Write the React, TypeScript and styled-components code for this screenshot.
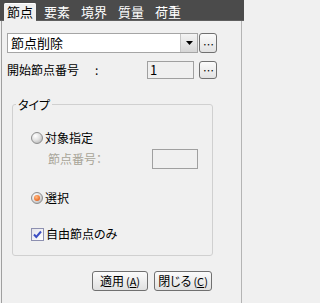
import React from "react";
import styled, { createGlobalStyle } from "styled-components";

const Global = createGlobalStyle`
  html, body { margin: 0; padding: 0; background: #f0f0f0; }
  body { font-family: "Noto Sans CJK JP", "Noto Sans", sans-serif; }
  * { box-sizing: border-box; }
`;

const Window = styled.div`
  width: 244px;
  height: 303px;
  display: flex;
  flex-direction: column;
  overflow: hidden;
  background: #f0f0f0;
  font-size: 12px;
  color: #000;
  font-feature-settings: "palt";
`;

const TabBar = styled.div`
  height: 21px;
  flex: none;
  background: #4b4b4b;
  border-bottom: 1px solid #5f5f5f;
  display: flex;
  align-items: flex-end;
  gap: 5px;
  padding-left: 4px;
`;

const Tab = styled.div<{ $active?: boolean }>`
  width: 32px;
  height: 18px;
  margin-bottom: -1px;
  display: flex;
  align-items: center;
  justify-content: center;
  font-size: 13px;
  line-height: 18px;
  color: ${(p) => (p.$active ? "#000" : "#fff")};
  background: ${(p) => (p.$active ? "#f0f0f0" : "transparent")};
  border-radius: 2px 2px 0 0;
  box-shadow: ${(p) => (p.$active ? "inset 0 1px 0 #ffffff" : "none")};
`;

const Panel = styled.div`
  flex: 1;
  width: 241px;
  margin-left: 1px;
  border-left: 1px solid #a0a0a0;
  border-right: 1px solid #b4b4b4;
  padding: 12px 0 0 5px;
  display: flex;
  flex-direction: column;
`;

const Row = styled.div<{ $top?: number; $h: number }>`
  display: flex;
  align-items: center;
  height: ${(p) => p.$h}px;
  margin-top: ${(p) => p.$top ?? 0}px;
`;

const Combo = styled.div`
  width: 191px;
  height: 20px;
  border: 1px solid #a5a5a5;
  background: #fff;
  display: flex;
`;

const ComboText = styled.div`
  flex: 1;
  padding-left: 3px;
  font-size: 13px;
  line-height: 18px;
`;

const ComboArrow = styled.div`
  width: 17px;
  height: 100%;
  border-left: 1px solid #c6c6c6;
  background: linear-gradient(#f4f4f4, #d6d6d6);
  display: flex;
  align-items: center;
  justify-content: center;
`;

const DotButton = styled.div<{ $h: number }>`
  width: 18px;
  height: ${(p) => p.$h}px;
  margin-left: 5px;
  border: 1px solid #707070;
  border-radius: 3px;
  background: linear-gradient(#fbfbfb, #e2e2e2);
  display: flex;
  align-items: flex-end;
  justify-content: center;
  font-size: 11px;
  line-height: 12px;
  padding-bottom: 2px;
  letter-spacing: -1px;
`;

const Label = styled.span<{ $w?: number; $muted?: boolean }>`
  width: ${(p) => (p.$w ? `${p.$w}px` : "auto")};
  flex: none;
  line-height: 14px;
  white-space: nowrap;
  color: ${(p) => (p.$muted ? "#a8a598" : "#000")};
`;

const TextBox = styled.div<{ $w: number; $h: number }>`
  width: ${(p) => p.$w}px;
  height: ${(p) => p.$h}px;
  border: 1px solid #a0a0a0;
  background: #f0f0f0;
  padding-left: 2px;
  font-size: 13px;
  line-height: ${(p) => p.$h - 2}px;
  flex: none;
`;

const Group = styled.fieldset`
  margin: 19px 0 0 5px;
  width: 201px;
  padding: 0;
  border: 1px solid #d0d0d0;
  border-radius: 3px;
  min-width: 0;
`;

const Legend = styled.legend`
  margin-left: 3px;
  padding: 0 2px;
  font-size: 12px;
  line-height: 13px;
`;

const GroupBody = styled.div`
  display: flex;
  flex-direction: column;
  padding: 20px 14px 14px 18px;
`;

const OptionRow = styled.div<{ $top?: number }>`
  display: flex;
  align-items: center;
  gap: 2px;
  height: 14px;
  margin-top: ${(p) => p.$top ?? 0}px;
`;

const SubRow = styled.div`
  display: flex;
  align-items: center;
  height: 20px;
  margin-top: 4px;
  padding-left: 17px;
  justify-content: space-between;
`;

const Radio = styled.span<{ $checked?: boolean }>`
  position: relative;
  flex: none;
  width: 12px;
  height: 12px;
  border-radius: 50%;
  border: 1px solid #8e8e8e;
  background: radial-gradient(circle at 35% 30%, #ffffff 0%, #e2e2e2 45%, #a9a9a9 100%);
  &::after {
    content: "";
    display: ${(p) => (p.$checked ? "block" : "none")};
    position: absolute;
    inset: 2px;
    border-radius: 50%;
    background: radial-gradient(circle at 40% 35%, #ffc08a 0%, #f07a36 55%, #d2501a 100%);
  }
`;

const CheckBox = styled.span`
  flex: none;
  width: 13px;
  height: 13px;
  border: 1px solid #8d90b0;
  background: linear-gradient(135deg, #e4e4ea, #ffffff);
  display: flex;
  align-items: center;
  justify-content: center;
`;

const Footer = styled.div`
  display: flex;
  justify-content: flex-end;
  gap: 6px;
  width: 205px;
  margin-top: 15px;
`;

const PushButton = styled.div<{ $w: number }>`
  width: ${(p) => p.$w}px;
  height: 20px;
  border: 1px solid #707070;
  border-radius: 3px;
  background: linear-gradient(#fbfbfb, #e0e0e0);
  display: flex;
  align-items: center;
  justify-content: center;
  font-size: 12px;
  line-height: 14px;
  white-space: nowrap;
  & u { text-underline-offset: 1px; }
`;

const Small = styled.span`
  font-size: 11px;
  margin-left: 2px;
`;

export default function App() {
  const tabs = ["節点", "要素", "境界", "質量", "荷重"];
  return (
    <Window>
      <Global />
      <TabBar>
        {tabs.map((t, i) => (
          <Tab key={t} $active={i === 0}>
            {t}
          </Tab>
        ))}
      </TabBar>
      <Panel>
        <Row $h={20}>
          <Combo>
            <ComboText>節点削除</ComboText>
            <ComboArrow>
              <svg width="7" height="4" viewBox="0 0 7 4">
                <path d="M0 0H7L3.5 4Z" fill="#000" />
              </svg>
            </ComboArrow>
          </Combo>
          <DotButton $h={20} style={{ marginLeft: 1 }}>…</DotButton>
        </Row>
        <Row $h={18} $top={8}>
          <Label $w={88}>開始節点番号</Label>
          <Label $w={52}>:</Label>
          <TextBox $w={47} $h={18}>1</TextBox>
          <DotButton $h={18}>…</DotButton>
        </Row>
        <Group>
          <Legend>タイプ</Legend>
          <GroupBody>
            <OptionRow>
              <Radio />
              <Label>対象指定</Label>
            </OptionRow>
            <SubRow>
              <Label $muted>節点番号：</Label>
              <TextBox $w={46} $h={20} />
            </SubRow>
            <OptionRow $top={22}>
              <Radio $checked />
              <Label>選択</Label>
            </OptionRow>
            <OptionRow $top={22}>
              <CheckBox>
                <svg width="11" height="11" viewBox="0 0 11 11">
                  <path d="M2 5.5L4.3 8L9 2.5" fill="none" stroke="#3d4fc4" strokeWidth="2" />
                </svg>
              </CheckBox>
              <Label>自由節点のみ</Label>
            </OptionRow>
          </GroupBody>
        </Group>
        <Footer>
          <PushButton $w={56}>
            適用<Small>(<u>A</u>)</Small>
          </PushButton>
          <PushButton $w={58}>
            閉じる<Small>(<u>C</u>)</Small>
          </PushButton>
        </Footer>
      </Panel>
    </Window>
  );
}
